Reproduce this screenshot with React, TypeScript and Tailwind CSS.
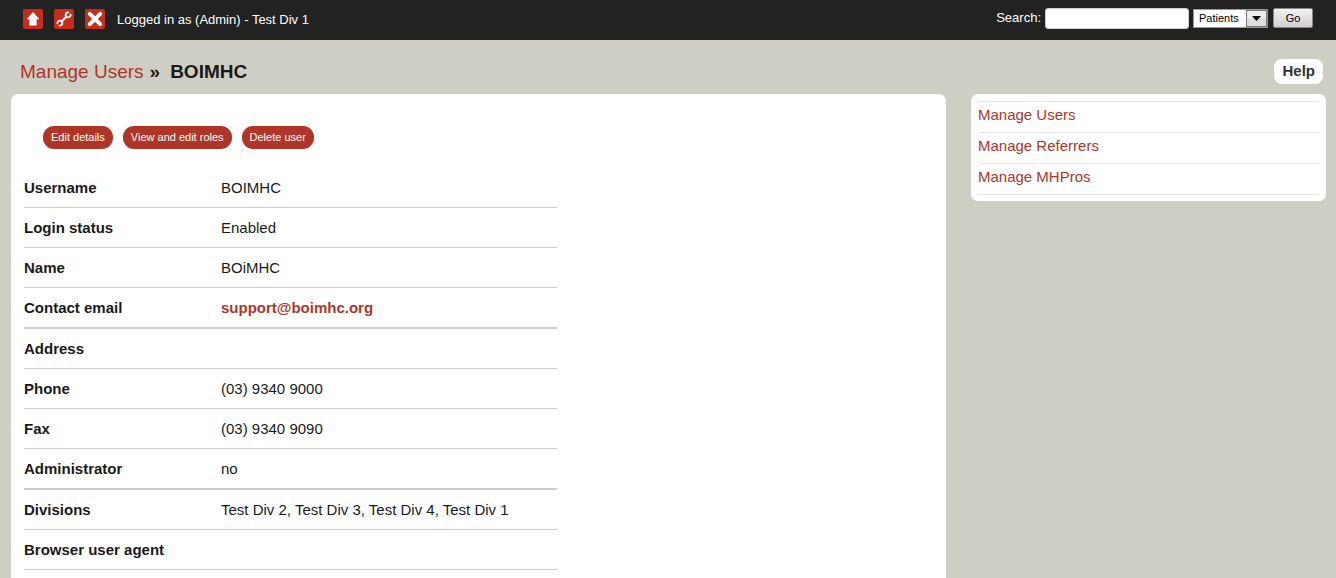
import React from "react";

const iconLinks = [
  {
    label: "Home",
    drawing: <path d="M10 3 L16.4 10.2 H13.6 V16.5 H6.4 V10.2 H3.6 Z" fill="#fff" />,
  },
  {
    label: "Settings",
    drawing: (
      <g stroke="#fff" fill="none">
        <path d="M7 13 L13 7" strokeWidth="2.2" />
        <path d="M14.4 3.4 A2.5 2.5 0 1 0 16.6 5.6" strokeWidth="1.8" strokeLinecap="round" />
        <path d="M5.6 16.6 A2.5 2.5 0 1 0 3.4 14.4" strokeWidth="1.8" strokeLinecap="round" />
      </g>
    ),
  },
  {
    label: "Log out",
    drawing: (
      <path d="M4.8 4.8 L15.2 15.2 M15.2 4.8 L4.8 15.2" stroke="#fff" strokeWidth="4" strokeLinecap="round" />
    ),
  },
];

const actions = ["Edit details", "View and edit roles", "Delete user"];

const details: { label: string; value: React.ReactNode; heavy?: boolean }[] = [
  { label: "Username", value: "BOIMHC" },
  { label: "Login status", value: "Enabled" },
  { label: "Name", value: "BOiMHC" },
  {
    label: "Contact email",
    value: (
      <a href="mailto:support@boimhc.org" className="font-bold text-[#b03529]">
        support@boimhc.org
      </a>
    ),
    heavy: true,
  },
  { label: "Address", value: "" },
  { label: "Phone", value: "(03) 9340 9000" },
  { label: "Fax", value: "(03) 9340 9090" },
  { label: "Administrator", value: "no", heavy: true },
  { label: "Divisions", value: "Test Div 2, Test Div 3, Test Div 4, Test Div 1" },
  { label: "Browser user agent", value: "" },
];

const sideLinks = ["Manage Users", "Manage Referrers", "Manage MHPros"];

function TopBar() {
  return (
    <header className="flex h-10 items-center justify-between bg-[#222] px-[23px] text-[13px] text-white">
      <div className="flex items-end pb-0.5">
        <nav className="flex gap-[11px]">
          {iconLinks.map((icon) => (
            <a key={icon.label} href="#" aria-label={icon.label}>
              <svg viewBox="0 0 20 20" className="block size-5">
                <rect width="20" height="20" rx="2" fill="#c42d1c" />
                {icon.drawing}
              </svg>
            </a>
          ))}
        </nav>
        <span className="ml-3">Logged in as (Admin) - Test Div 1</span>
      </div>
      <form className="flex items-center pb-1" onSubmit={(e) => e.preventDefault()}>
        <label htmlFor="search" className="mr-1">
          Search:
        </label>
        <input
          id="search"
          type="text"
          className="h-[21px] w-36 rounded-[3px] border border-[#ccc] bg-white px-1 text-black"
        />
        <div className="relative ml-1">
          <select
            aria-label="Search in"
            className="block h-[19px] w-[75px] appearance-none border border-[#999] bg-white pl-[5px] text-[11px] leading-4 text-black"
          >
            <option>Patients</option>
            <option>Referrers</option>
          </select>
          <svg viewBox="0 0 21 17" className="pointer-events-none absolute top-px right-px h-[17px] w-[21px]">
            <rect x="0.5" y="0.5" width="20" height="16" fill="#ddd" stroke="#777" />
            <rect x="1" y="1" width="19" height="7" fill="#eee" />
            <path d="M6 6 H15 L10.5 11 Z" fill="#000" />
          </svg>
        </div>
        <button
          type="submit"
          className="ml-[5px] h-5 w-10 rounded-[2px] border border-[#888] bg-linear-to-b from-[#f2f2f2] to-[#cfcfcf] text-[11px] leading-4 text-black"
        >
          Go
        </button>
      </form>
    </header>
  );
}

export default function App() {
  return (
    <div className="min-h-screen bg-[#cfcec5] font-['Liberation_Sans',Arial,sans-serif] text-[15px] text-[#1a1a1a]">
      <TopBar />
      <div className="flex items-center justify-between pt-[19px] pr-[13px] pb-[10px] pl-5">
        <h1 className="flex text-[19px] leading-[25px]">
          <a href="#" className="text-[#b03529]">
            Manage Users
          </a>
          <span className="ml-1.5 font-bold">»</span>
          <span className="ml-2.5 font-bold">BOIMHC</span>
        </h1>
        <button type="button" className="h-[25px] rounded-lg bg-white px-2 font-bold text-[#333]">
          Help
        </button>
      </div>
      <div className="flex items-start gap-[25px] pr-2.5 pl-[11px]">
        <main className="w-[935px] shrink rounded-[7px] bg-white px-[13px] pt-8 pb-4">
          <div className="flex gap-2.5 pl-[19px]">
            {actions.map((action) => (
              <button
                key={action}
                type="button"
                className="h-[23px] rounded-[11px] bg-[#b03529] px-2 text-[11px] text-white"
              >
                {action}
              </button>
            ))}
          </div>
          <table className="mt-[19px] w-full max-w-[533px] border-collapse text-left">
            <tbody>
              {details.map((row) => {
                const cell = row.heavy
                  ? "h-[41px] border-b-2 border-[#ccc] leading-[39px]"
                  : "h-10 border-b border-[#ccc] leading-[39px]";
                return (
                  <tr key={row.label}>
                    <th scope="row" className="w-[197px] p-0 font-bold">
                      <div className={cell}>{row.label}</div>
                    </th>
                    <td className="p-0">
                      <div className={cell}>{row.value}</div>
                    </td>
                  </tr>
                );
              })}
            </tbody>
          </table>
        </main>
        <aside className="flex-1 rounded-[7px] bg-white px-[7px] pt-[7px] pb-1.5">
          <ul className="border-t border-[#e8e8e8]">
            {sideLinks.map((link) => (
              <li key={link} className="border-b border-[#e8e8e8] pb-1 leading-[26px]">
                <a href="#" className="text-[#b03529]">
                  {link}
                </a>
              </li>
            ))}
          </ul>
        </aside>
      </div>
    </div>
  );
}
